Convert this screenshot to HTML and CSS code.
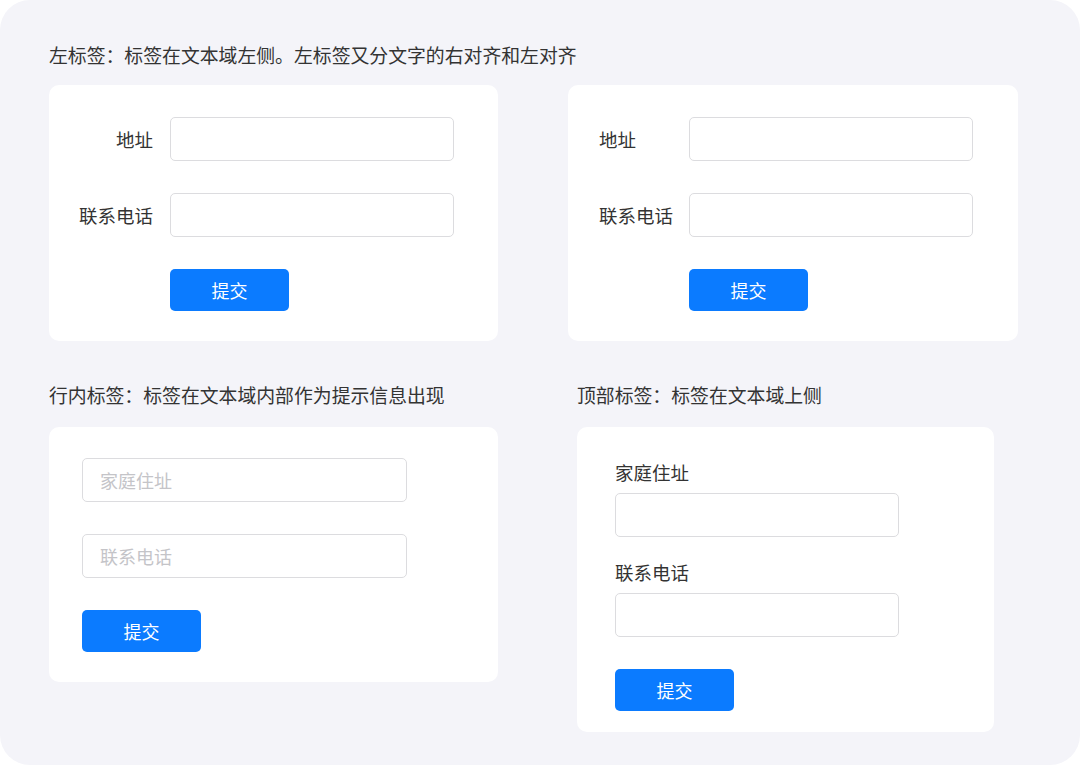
FILE: index.html
```html
<!DOCTYPE html>
<html lang="zh-CN">
<head>
    <meta charset="utf-8">
    <title>表单标签位置</title>
	<link rel="stylesheet" href="styles.css">
</head>
<body>
	<div class="panel">
		<section class="section-top">
			<h2 class="section-title">左标签：标签在文本域左侧。左标签又分文字的右对齐和左对齐</h2>
			<div class="card-row">
				<form class="card form-left align-right">
					<div class="field">
						<label>地址</label>
						<input type="text">
					</div>
					<div class="field">
						<label>联系电话</label>
						<input type="text">
					</div>
					<div class="field">
						<span class="spacer"></span>
						<button type="button" class="btn">提交</button>
					</div>
				</form>
				<form class="card form-left align-left">
					<div class="field">
						<label>地址</label>
						<input type="text">
					</div>
					<div class="field">
						<label>联系电话</label>
						<input type="text">
					</div>
					<div class="field">
						<span class="spacer"></span>
						<button type="button" class="btn">提交</button>
					</div>
				</form>
			</div>
		</section>

		<section class="section-bottom">
			<div class="col col-inline">
				<h2 class="section-title">行内标签：标签在文本域内部作为提示信息出现</h2>
				<form class="card form-inline">
					<input type="text" placeholder="家庭住址">
					<input type="text" placeholder="联系电话">
					<button type="button" class="btn">提交</button>
				</form>
			</div>
			<div class="col col-top">
				<h2 class="section-title">顶部标签：标签在文本域上侧</h2>
				<form class="card form-top">
					<label>家庭住址</label>
					<input type="text">
					<label>联系电话</label>
					<input type="text">
					<button type="button" class="btn">提交</button>
				</form>
			</div>
		</section>
	</div>
</body>
</html>
```

FILE: styles.css
```css
* {
	box-sizing: border-box;
}
body {
	margin: 0;
	background-color: white;
	font-family: "Noto Sans CJK SC", "Noto Sans", sans-serif;
	color: #333;
}
.panel {
	width: 1080px;
	height: 765px;
	background-color: #f4f4f9;
	border-radius: 30px;
	padding: 42px 0 0 49px;
}
.section-title {
	margin: 0;
	font-size: 18.85px;
	font-weight: normal;
	line-height: 26px;
	color: #333;
}
.section-top .section-title {
	margin-bottom: 17px;
}
.card-row {
	display: flex;
	gap: 70px;
}
.card {
	background-color: white;
	border-radius: 10px;
}
input {
	font-family: inherit;
	font-size: 18px;
	height: 44px;
	border: 1px solid #dcdcdf;
	border-radius: 5px;
	background: white;
	padding: 0 17px;
	outline: none;
}
input::placeholder {
	color: #c4c4c8;
}
.btn {
	width: 119px;
	height: 42px;
	border: none;
	border-radius: 5px;
	background-color: #0b7bff;
	color: white;
	font-family: inherit;
	font-size: 18px;
	padding: 0;
}

/* 左标签 */
.form-left {
	width: 449px;
	height: 256px;
	padding: 32px 0 0 30px;
	display: flex;
	flex-direction: column;
	gap: 32px;
}
.form-left .field {
	display: flex;
	align-items: center;
	gap: 17px;
}
.form-left label,
.form-left .spacer {
	width: 74px;
	font-size: 18.5px;
	white-space: nowrap;
}
.align-right label {
	text-align: right;
}
.align-left {
	padding-left: 31px;
	width: 450px;
}
.align-left .field {
	gap: 16px;
}
.form-left input {
	width: 284px;
}

/* 下半部分 */
.section-bottom {
	display: flex;
	gap: 79px;
	margin-top: 41px;
}
.col .section-title {
	margin-bottom: 19px;
}

/* 行内标签 */
.form-inline {
	width: 449px;
	height: 255px;
	padding: 31px 0 0 33px;
	display: flex;
	flex-direction: column;
	align-items: flex-start;
	gap: 32px;
}
.form-inline input {
	width: 325px;
}

/* 顶部标签 */
.form-top {
	width: 417px;
	height: 305px;
	padding: 33px 0 0 38px;
	display: flex;
	flex-direction: column;
	align-items: flex-start;
}
.form-top label {
	font-size: 18.5px;
	line-height: 24px;
	margin-bottom: 9px;
}
.form-top input {
	width: 284px;
	margin-bottom: 23px;
}
.form-top .btn {
	margin-top: 9px;
}
```
